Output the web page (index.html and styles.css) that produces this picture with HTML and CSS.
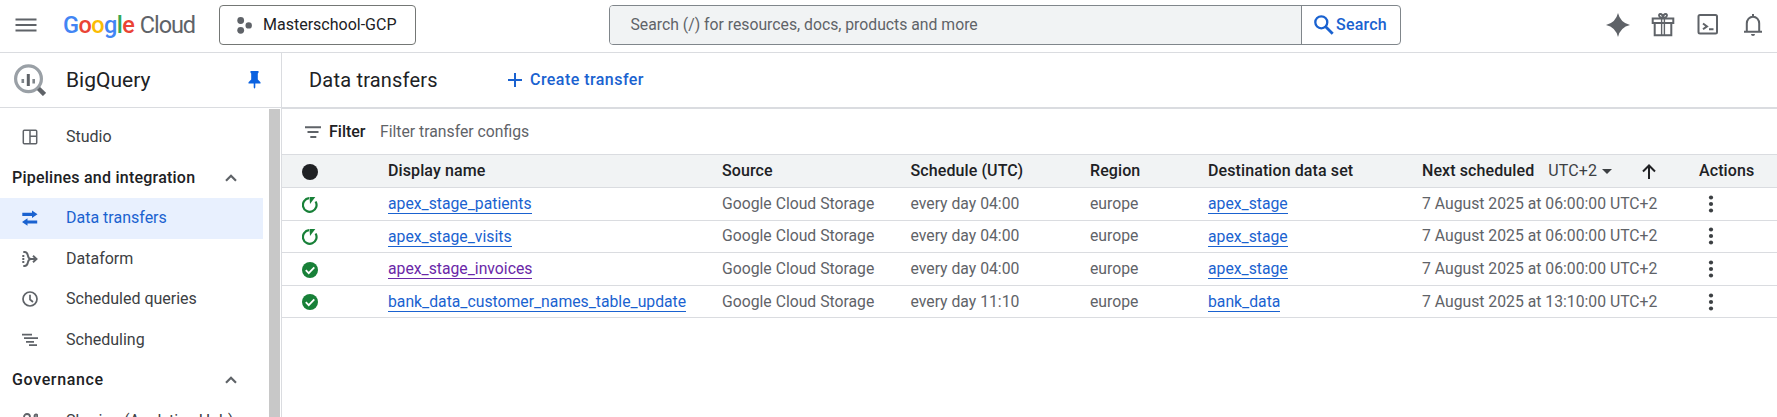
FILE: index.html
```html
<!DOCTYPE html>
<html lang="en">
<head>
<meta charset="utf-8">
<title>Data transfers – BigQuery</title>
<link rel="stylesheet" href="styles.css">
</head>
<body>
<header class="topbar">
  <svg class="menu" width="22" height="14" viewBox="0 0 22 14"><path d="M0.500 1.500h21M0.500 7h21M0.500 12.500h21" stroke="#5f6368" stroke-width="2"/></svg>
  <div class="logo"><span class="google"><span class="b">G</span><span class="r">o</span><span class="y">o</span><span class="b">g</span><span class="g">l</span><span class="r">e</span></span><span class="cloud">Cloud</span></div>
  <button class="project"><svg width="15" height="17" viewBox="0 0 15 17" fill="#5f6368"><circle cx="3.700" cy="3.500" r="3.400"/><circle cx="3.700" cy="13.300" r="3.400"/><circle cx="11.700" cy="8.400" r="3.200"/></svg><span class="project-name">Masterschool-GCP</span></button>
  <div class="search">
    <div class="search-input"><span>Search (/) for resources, docs, products and more</span></div>
    <div class="search-btn"><svg width="20" height="20" viewBox="0 0 20 20" fill="none" stroke="#1a62d0"><circle cx="7.300" cy="7.300" r="6" stroke-width="2.300"/><path d="M11.700 11.700l7 7" stroke-width="2.800"/></svg><span>Search</span></div>
  </div>
  <div class="tools">
    <svg width="24" height="24" viewBox="0 0 24 24" fill="#5f6368"><path d="M12 0q2.300 9.700 12 12q-9.700 2.300-12 12q-2.300-9.700-12-12q9.700-2.300 12-12z"/></svg>
    <svg width="24" height="24" viewBox="0 0 24 24" fill="none" stroke="#5f6368"><path d="M1.700 5.500h20.600v4.500H1.700zM3.700 10v12.300h16.600V10" stroke-width="2"/><path d="M10.600 5.500v17M13.400 5.500v17" stroke-width="1.400"/><path d="M11.800 5c-4 0-4.800-4-2.500-4s2.500 2 2.500 4zM12.200 5c4 0 4.800-4 2.500-4s-2.500 2-2.500 4z" stroke-width="1.900"/></svg>
    <svg width="24" height="24" viewBox="0 0 24 24" fill="none" stroke="#5f6368" stroke-width="2"><rect x="2.500" y="2" width="18.500" height="18.500" rx="1.500"/><path d="M7 10.500l4 2.900l-4 2.900M13 16.300h4.500"/></svg>
    <svg width="24" height="24" viewBox="0 0 24 24" fill="none" stroke="#5f6368" stroke-width="2"><path d="M3 18.800h18M5.800 18.800v-8.300a6.200 6.800 0 0 1 12.400 0v8.300M12 1v3"/><path d="M10 21h4a2 2 0 0 1-4 0z" fill="#5f6368" stroke="none"/></svg>
  </div>
</header>
<div class="body">
  <aside class="side">
    <div class="product">
      <svg class="bq" width="32" height="32" viewBox="0 0 32 32" fill="none"><circle cx="14.500" cy="14.700" r="12.900" stroke="#9aa0a6" stroke-width="3.200"/><path d="M8.800 15v4M19.700 15v4.500" stroke="#80868b" stroke-width="2.600"/><path d="M14.300 10v12" stroke="#5f6368" stroke-width="3"/><path d="M24.500 24.500l6 6" stroke="#5f6368" stroke-width="4.500"/></svg>
      <h2>BigQuery</h2>
      <svg class="pin" width="13" height="18" viewBox="0 0 13 18" fill="#0b62e0"><path d="M2.500 0h8v1.800l-.7.600v6.200l2.700 2.600v1.200h-5.200v4.200l-.8 1.200-.8-1.200v-4.200h-5.200v-1.200l2.700-2.600V2.400l-.7-.6z"/></svg>
    </div>
    <div class="nav-wrap">
      <nav class="nav">
        <a class="item"><svg viewBox="0 0 16 16" fill="none" stroke="#5f6368" stroke-width="1.500"><rect x="1.300" y="1.300" width="13.400" height="13.400" rx="1"/><path d="M8 1.300v13.400M8 7.300h6.700"/></svg><span>Studio</span></a>
        <div class="group"><span>Pipelines and integration</span><svg class="chev" viewBox="0 0 12 8"><path d="M1 6.800l5-5 5 5" fill="none" stroke="#5f6368" stroke-width="2.200"/></svg></div>
        <a class="item active"><svg viewBox="0 0 16 16" fill="#1a62d0"><path d="M.3 2.700h9.700V.6l5.500 3.700L10 8V5.900H.3zM15.200 10.400H5.500V8.300L0 12l5.500 3.700v-2.100h9.700z"/></svg><span>Data transfers</span></a>
        <a class="item"><svg viewBox="0 0 16 16" fill="none" stroke="#5f6368" stroke-width="1.900"><path d="M1.300 1h1.200c3 0 3 2 3.500 4s1 3 3 3h5M1.300 15h1.200c3 0 3-2 3.500-4s1-3 3-3M11 4.800l3.500 3.200-3.500 3.200"/><path d="M.3 5h2M.3 8h2M.3 11h2"/></svg><span>Dataform</span></a>
        <a class="item"><svg viewBox="0 0 16 16" fill="none" stroke="#5f6368" stroke-width="1.700"><circle cx="8" cy="8" r="7"/><path d="M8 3.800V8.500l3 2.500"/></svg><span>Scheduled queries</span></a>
        <a class="item"><svg viewBox="0 0 16 16" fill="none" stroke="#5f6368" stroke-width="1.800"><path d="M0 2.700h10M2 6.200h14M4 9.800h8M7 13.200h8"/></svg><span>Scheduling</span></a>
        <div class="group governance"><span>Governance</span><svg class="chev" viewBox="0 0 12 8"><path d="M1 6.800l5-5 5 5" fill="none" stroke="#5f6368" stroke-width="2.200"/></svg></div>
        <a class="item"><svg viewBox="0 0 16 16" fill="none" stroke="#5f6368" stroke-width="1.800"><circle cx="5" cy="4" r="3"/><circle cx="14" cy="3" r="1.500"/></svg><span>Sharing (Analytics Hub)</span></a>
      </nav>
      <div class="scroll"></div>
    </div>
  </aside>
  <main class="main">
    <div class="titlebar"><h1>Data transfers</h1><a class="create"><svg width="14" height="14" viewBox="0 0 14 14"><path d="M7 0v14M0 7h14" stroke="#1a62d0" stroke-width="2"/></svg><span>Create transfer</span></a></div>
    <div class="filter"><svg width="16" height="12" viewBox="0 0 16 12"><path d="M0 1.300h16M2.500 6h11M5.300 10.900h6" stroke="#5f6368" stroke-width="2"/></svg><b>Filter</b><span class="hint">Filter transfer configs</span></div>
    <div class="row head"><div class="status"><i class="dot"></i></div><div>Display name</div><div>Source</div><div>Schedule (UTC)</div><div>Region</div><div>Destination data set</div><div><span>Next scheduled</span><span class="tz">UTC+2</span><i class="caret"></i><svg class="up" width="14" height="15" viewBox="0 0 14 15" fill="none" stroke="#202124" stroke-width="2"><path d="M7 15V1.500M1 7.500l6-6 6 6"/></svg></div><div>Actions</div></div>
    <div id="rows"></div>
  </main>
</div>
<script src="app.js"></script>
</body>
</html>
```
FILE: styles.css
```css
*{box-sizing:border-box}
body{margin:0;width:1777px;height:417px;overflow:hidden;background:#fff;color:#3c4043;font:16px/20px Roboto,sans-serif;display:flex;flex-direction:column}
svg{display:block;flex:none}
h1,h2{margin:0;font:400 20px/26px Roboto,sans-serif;color:#202124}
.topbar{height:53px;flex:none;border-bottom:1px solid #dadce0;display:flex;align-items:center;padding-bottom:2px}
.menu{margin-left:15px}
.logo{display:flex;margin-left:26px;width:156px;font:400 23.5px/26px Roboto,sans-serif;padding-bottom:1px}
.google{letter-spacing:-.55px;font-weight:500}
.cloud{color:#5f6368;margin-left:5.5px;letter-spacing:-1.1px}
.b{color:#4285f4}.r{color:#ea4335}.y{color:#fbbc04}.g{color:#34a853}
.project{height:40px;width:197px;border:1px solid #747775;border-radius:4px;background:#fff;display:flex;align-items:center;padding:0 0 0 17px;gap:11px;font:16px/20px Roboto,sans-serif;color:#202124}
.search{display:flex;margin-left:193px;width:792px;height:40px;border:1px solid #80868b;border-radius:4px;overflow:hidden}
.search-input{width:692px;background:#f1f3f4;border-right:1px solid #80868b;padding:9px 0 0 20.5px;color:#5f6368;font-size:15.75px}
.search-btn{display:flex;align-items:center;padding:0 0 0 12px;gap:2px;color:#1a62d0;font-weight:500;letter-spacing:.2px}
.tools{display:flex;gap:21px;margin-left:204.5px}
.body{display:flex;flex:1;min-height:0}
.side{width:282px;border-right:1px solid #dadce0;display:flex;flex-direction:column}
.product{height:55px;flex:none;border-bottom:1px solid #dadce0;display:flex;align-items:center;padding-left:14px}
.product h2{margin-left:20px;width:182px;font-size:21px}
.nav-wrap{display:flex;flex:1;min-height:0}
.nav{width:269px;padding-top:9px;overflow:hidden}
.item,.group{width:263px;height:40.5px;display:flex;align-items:center;color:#3c4043}
.item svg{width:16px;height:16px;margin:0 28px 0 22px}
.item.active{background:#e8f0fe;color:#1a62d0}
.group{padding:0 26px 0 12px;justify-content:space-between;font-weight:500;letter-spacing:.23px;color:#202124}
.governance{letter-spacing:.65px}
.chev{width:12px;height:8px}
.scroll{width:11px;margin-top:1px;background:#c8c8c8}
.main{flex:1}
.titlebar{height:56px;border-bottom:2px solid #dadce0;display:flex;align-items:center;padding-left:27px}
.titlebar h1{width:199px;letter-spacing:.2px}
.create{display:flex;align-items:center;gap:8px;color:#1a62d0;font-weight:500;letter-spacing:.45px}
.filter{height:46px;border-bottom:1px solid #dadce0;display:flex;align-items:center;padding-left:23px}
.filter b{font-weight:500;color:#202124;margin:0 15px 0 8px;width:36px}
.hint{color:#5f6368;font-size:15.75px}
.row{display:grid;grid-template-columns:86px 334px 188.5px 179.5px 118px 214px 277px 1fr;padding-left:20px;height:32.6px;border-bottom:1px solid #dadce0;color:#5f6368;align-items:center;font-size:15.75px}
.row>div{display:flex;align-items:center}
.row>.status{padding-top:1.5px}
.head{height:33px;background:#f1f3f4;color:#202124;font-weight:500;font-size:16px;letter-spacing:.1px}
.dot{width:16px;height:16px;border-radius:50%;background:#202124}
.tz{margin-left:14px;font-weight:400;color:#3c4043}
.caret{border:5px solid transparent;border-top-color:#3c4043;border-bottom:0;margin-left:5px}
.up{margin-left:30px}
.link{color:#1a62d0;border-bottom:1px solid;line-height:19px;margin-top:1px}
.visited{color:#6a27a8}
.dots{margin-left:9px}
```
FILE: app.js
```js
const ok='<svg width="16" height="16" viewBox="0 0 16 16"><circle cx="8" cy="8" r="8" fill="#188038"/><path d="M3.800 8.200l2.900 2.900 5.600-5.800" fill="none" stroke="#fff" stroke-width="1.800"/></svg>';
const run='<svg width="16" height="16" viewBox="0 0 16 16"><path d="M7 1.200A6.800 6.800 0 1 0 13.600 4.500" fill="none" stroke="#188038" stroke-width="2.200"/><path d="M7.500 0h5.800L8 7z" fill="#188038"/></svg>';
const dots='<svg class="dots" width="6" height="18" viewBox="0 0 6 18" fill="#3c4043"><circle cx="3" cy="2.500" r="2.100"/><circle cx="3" cy="9" r="2.100"/><circle cx="3" cy="15.500" r="2.100"/></svg>';
const transfers=[
  [run,'apex_stage_patients','04:00','apex_stage','06:00:00',''],
  [run,'apex_stage_visits','04:00','apex_stage','06:00:00',''],
  [ok,'apex_stage_invoices','04:00','apex_stage','06:00:00','visited'],
  [ok,'bank_data_customer_names_table_update','11:10','bank_data','13:10:00','']
];
document.getElementById('rows').innerHTML=transfers.map(r=>`<div class="row"><div class="status">${r[0]}</div><div><span class="link ${r[5]}">${r[1]}</span></div><div>Google Cloud Storage</div><div>every day ${r[2]}</div><div>europe</div><div><span class="link">${r[3]}</span></div><div>7 August 2025 at ${r[4]} UTC+2</div><div>${dots}</div></div>`).join('');
```
